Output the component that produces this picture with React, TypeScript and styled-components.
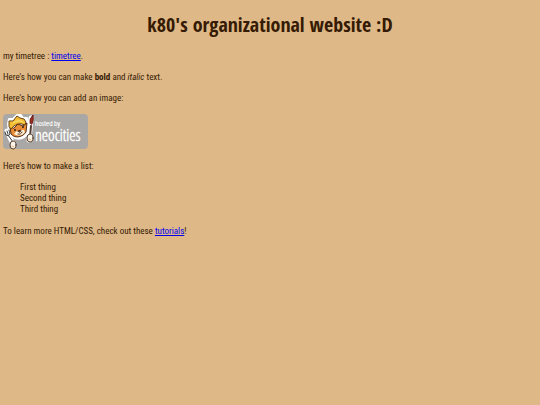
import React from "react";
import styled, { createGlobalStyle } from "styled-components";

const GlobalStyle = createGlobalStyle`
  body {
    margin: 0;
    background: #deb887;
    color: #351a04;
    font-family: "Roboto Condensed", "DejaVu Sans Condensed", sans-serif;
    font-size: 9px;
    line-height: 11px;
  }
`;

const Page = styled.main`
  padding: 14px 3px;
`;

const Title = styled.h1`
  margin: 0 0 15px;
  font-family: "Open Sans Condensed", "DejaVu Sans Condensed", sans-serif;
  font-size: 20px;
  line-height: 22px;
  text-align: center;
`;

const Paragraph = styled.p`
  margin: 0 0 10px;
`;

const Link = styled.a`
  color: #0000ee;
  text-decoration: underline;
`;

const List = styled.ul`
  margin: 0 0 11px;
  padding-left: 17px;
  list-style: none;
`;

const BadgeLink = styled.a`
  display: block;
  width: 85px;
  margin: 0 0 11px;
`;

const Badge = styled.svg`
  display: block;
  width: 85px;
  height: 36px;
`;

const BadgeText = styled.text<{ $size: number }>`
  fill: #fff;
  font-family: "Open Sans Condensed Light", "Open Sans Condensed", sans-serif;
  font-size: ${({ $size }) => $size}px;
  font-weight: 300;
`;

function NeocitiesBadge() {
  return (
    <Badge viewBox="0 0 85 36" role="img" aria-label="hosted by neocities">
      <rect x="0" y="0" width="85" height="35" rx="4" fill="#a9a8a6" />
      <BadgeText x="32" y="12" $size={8} stroke="#fff" strokeWidth="0.2">hosted by</BadgeText>
      <BadgeText x="32" y="27" $size={16} stroke="#fff" strokeWidth="0.4">neocities</BadgeText>
      <g strokeLinecap="round" strokeLinejoin="round">
        <path d="M4 17 L10 30" fill="none" stroke="#fff" strokeWidth="5" />
        <path d="M28 4 L26 26" stroke="#fff" strokeWidth="5" />
        <path d="M5 10 L6 5 L10 5 L14 1 L18 1 L20 4 L24 4 L25 8 L25 17 C24 25 14 27 9 22 L6 18Z" fill="#fff" stroke="#fff" strokeWidth="2" />
        <path d="M7 13 L8 20 C12 25 20 23 23 18 L24 9 L20 12 L15 10 L11 14Z" fill="#e98c35" stroke="#573018" strokeWidth="1" />
        <path d="M6 12 L6 7 L10 7 L14 2 L17 4 L21 5 L23 8 L22 11 Q14 7 8 15Z" fill="#f2bd35" stroke="#684014" strokeWidth="1" />
        <path d="M10 9 Q15 5 20 8" fill="none" stroke="#ffe681" strokeWidth="1" />
        <path d="M11 20 Q14 15 17 17 Q21 14 22 18 Q18 24 11 20" fill="#fff4dc" />
        <circle cx="12" cy="16" r="1" fill="#29231d" />
        <circle cx="20" cy="13" r="1" fill="#29231d" />
        <path d="M15 17 L18 16 L17 18Z" fill="#54301d" stroke="#54301d" strokeWidth="1" />
        <path d="M15 20 Q18 21 19 18" fill="none" stroke="#54301d" strokeWidth="1" />
        <path d="M5 21 L10 28 M2 18 L3 21 Q6 23 7 20 L6 16 M4 17 L5 20" fill="none" stroke="#3f3f3f" strokeWidth="1" />
        <path d="M28 12 L27 23" stroke="#554034" strokeWidth="2" />
        <path d="M27 9 Q26 5 30 1 Q31 6 29 10Z" fill="#a52d20" stroke="#6a2019" strokeWidth="1" />
        <ellipse cx="10" cy="31" rx="3" ry="4" fill="#fff8ed" stroke="#553a28" strokeWidth="1" />
        <ellipse cx="27" cy="24" rx="3" ry="4" fill="#fff8ed" stroke="#553a28" strokeWidth="1" />
        <path d="M9 32 L11 33 M26 25 L28 26" stroke="#eab06b" strokeWidth="1" />
      </g>
    </Badge>
  );
}

export default function App() {
  return (
    <>
      <GlobalStyle />
      <Page>
        <Title>k80's organizational website :D</Title>
        <Paragraph>my timetree : <Link href="#timetree">timetree</Link>.</Paragraph>
        <Paragraph>Here's how you can make <strong>bold</strong> and <em>italic</em> text.</Paragraph>
        <Paragraph>Here's how you can add an image:</Paragraph>
        <BadgeLink href="#neocities"><NeocitiesBadge /></BadgeLink>
        <Paragraph>Here's how to make a list:</Paragraph>
        <List>
          <li>First thing</li>
          <li>Second thing</li>
          <li>Third thing</li>
        </List>
        <Paragraph>To learn more HTML/CSS, check out these <Link href="#tutorials">tutorials</Link>!</Paragraph>
      </Page>
    </>
  );
}
